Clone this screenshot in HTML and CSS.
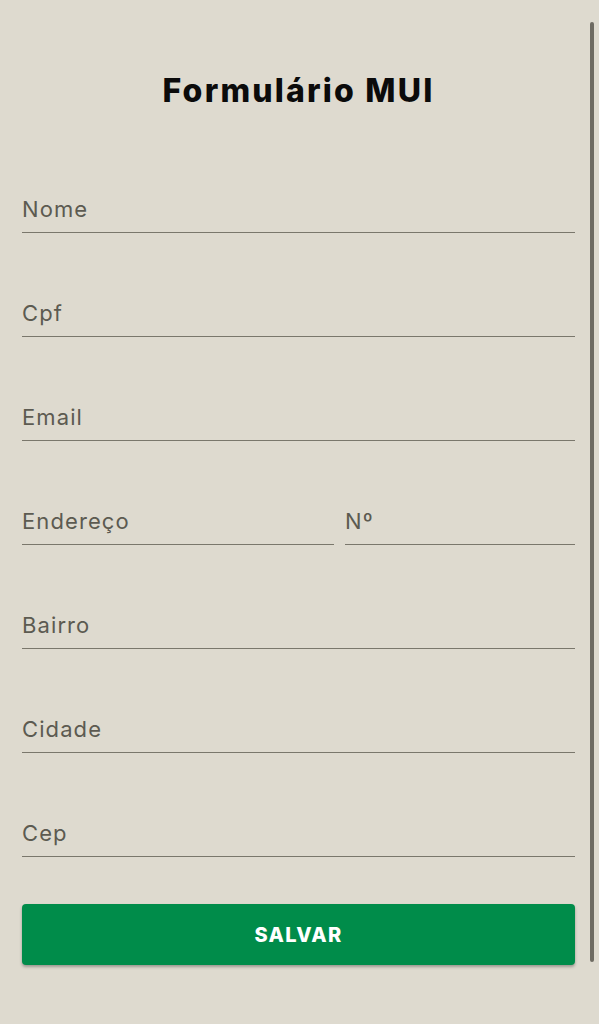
FILE: index.html
```html
<!DOCTYPE html>
<html lang="pt">
<head>
<meta charset="utf-8">
<link rel="stylesheet" href="styles.css">
</head>
<body>
<div class="page">
  <h1 class="title">Formulário MUI</h1>
  <form class="form">
    <div class="field"><span class="label">Nome</span></div>
    <div class="field"><span class="label">Cpf</span></div>
    <div class="field"><span class="label">Email</span></div>
    <div class="row">
      <div class="field grow"><span class="label">Endereço</span></div>
      <div class="field num"><span class="label">Nº</span></div>
    </div>
    <div class="field"><span class="label">Bairro</span></div>
    <div class="field"><span class="label">Cidade</span></div>
    <div class="field"><span class="label">Cep</span></div>
    <button type="button" class="btn">SALVAR</button>
  </form>
</div>
<div class="scrollbar"></div>
</body>
</html>
```
FILE: styles.css
```css
html, body {
  margin: 0;
  padding: 0;
  background: #dedacf;
  height: 100%;
}
body {
  font-family: Inter, "Noto Sans", sans-serif;
  overflow: hidden;
}
.page {
  padding: 0 24px 0 22px;
}
.title {
  margin: 0;
  padding-top: 71px;
  height: 40px;
  line-height: 40px;
  text-align: center;
  font-size: 32px;
  font-weight: 800;
  color: #0b0b0b;
  letter-spacing: 2.2px;
}
.form {
  display: flex;
  flex-direction: column;
  padding-top: 18px;
}
.field {
  padding-top: 65px;
  border-bottom: 1.5px solid #7a776c;
  height: 38px;
  box-sizing: content-box;
}
.label {
  display: block;
  line-height: 30px;
  font-size: 22px;
  color: #5c5a51;
  letter-spacing: 1.1px;
}
.row {
  display: flex;
  gap: 11px;
}
.grow {
  flex: 0 0 312px;
}
.num {
  flex: 1;
}
.btn {
  margin-top: 47px;
  height: 61px;
  border: 0;
  border-radius: 4px;
  background: #008c4a;
  color: #ffffff;
  font-family: Inter, "Noto Sans", sans-serif;
  font-size: 20px;
  font-weight: 800;
  letter-spacing: 1.3px;
  box-shadow: 0 2px 3px rgba(0,0,0,0.3);
}
.scrollbar {
  position: absolute;
  left: 590px;
  top: 22px;
  width: 4px;
  height: 940px;
  border-radius: 2px;
  background: #6e6b62;
}
```
